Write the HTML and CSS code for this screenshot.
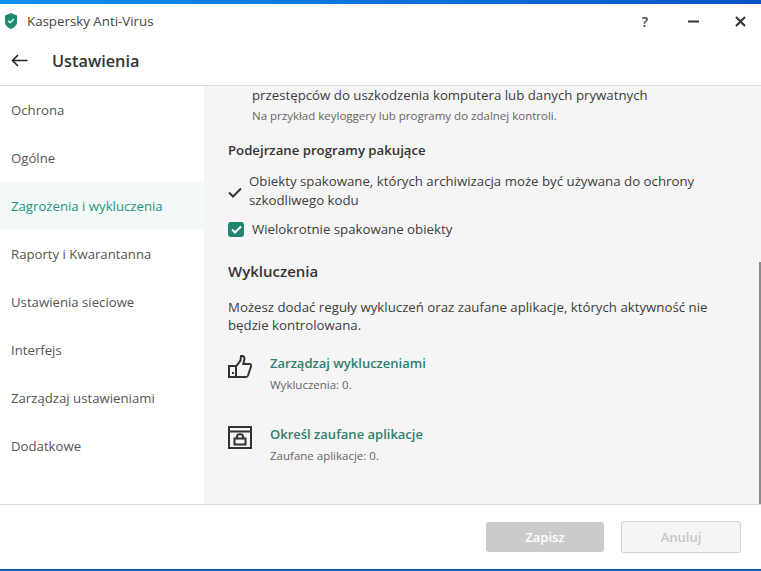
FILE: index.html
```html
<!DOCTYPE html>
<html lang="pl">
<head>
<meta charset="utf-8">
<title>Kaspersky Anti-Virus</title>
<link rel="stylesheet" href="styles.css">
</head>
<body>
<div class="window">
  <div class="topline"></div>
  <div class="titlebar">
    <svg class="logo" width="12" height="16" viewBox="0 0 12 16"><path d="M6 0 L12 2.5 V9 C12 12.5 9 14.8 6 16 C3 14.8 0 12.5 0 9 V2.5 Z" fill="#1d8a72"/><path d="M3.2 7.8 L5.2 9.8 L8.8 6" fill="none" stroke="#e8f6f2" stroke-width="1.4"/></svg>
    <span class="apptitle">Kaspersky Anti-Virus</span>
    <span class="winbtns">
      <span class="help">?</span>
      <svg width="11" height="3" viewBox="0 0 11 3"><rect width="11" height="2" y="0.5" fill="#333"/></svg>
      <svg width="11" height="11" viewBox="0 0 11 11"><path d="M1 1 L10 10 M10 1 L1 10" stroke="#333" stroke-width="2" fill="none"/></svg>
    </span>
  </div>
  <div class="header">
    <svg width="17" height="13" viewBox="0 0 17 13"><path d="M16.5 6.5 H1.5 M7 1 L1.5 6.5 L7 12" fill="none" stroke="#222" stroke-width="1.6"/></svg>
    <h1>Ustawienia</h1>
  </div>
  <div class="main">
    <nav class="side">
      <a>Ochrona</a>
      <a>Ogólne</a>
      <a class="active">Zagrożenia i wykluczenia</a>
      <a>Raporty i Kwarantanna</a>
      <a>Ustawienia sieciowe</a>
      <a>Interfejs</a>
      <a>Zarządzaj ustawieniami</a>
      <a>Dodatkowe</a>
    </nav>
    <div class="content">
      <p class="l1">przestępców do uszkodzenia komputera lub danych prywatnych</p>
      <p class="small l1b">Na przykład keyloggery lub programy do zdalnej kontroli.</p>
      <h3>Podejrzane programy pakujące</h3>
      <div class="check">
        <svg width="14" height="11" viewBox="0 0 14 11"><path d="M1 5.5 L5 9.5 L13 1.5" fill="none" stroke="#333" stroke-width="2"/></svg>
        <span>Obiekty spakowane, których archiwizacja może być używana do ochrony szkodliwego kodu</span>
      </div>
      <div class="boxrow">
        <span class="box"><svg width="11" height="9" viewBox="0 0 11 9"><path d="M1 4.5 L4 7.5 L10 1.5" fill="none" stroke="#fff" stroke-width="2"/></svg></span>
        <span>Wielokrotnie spakowane obiekty</span>
      </div>
      <h2>Wykluczenia</h2>
      <p class="desc">Możesz dodać reguły wykluczeń oraz zaufane aplikacje, których aktywność nie będzie kontrolowana.</p>
      <div class="item">
        <svg width="24" height="23" viewBox="0 0 24 23"><path d="M1 11 H8 V22 H1 Z M8 11.5 L12.5 5.5 L13 1 C15.5 0.6 16.8 2 16.3 4.5 L15.3 9 H21.5 C23 9 23.5 10 23 11.5 L20 20.5 C19.6 21.6 19 22 18 22 H8" fill="none" stroke="#333" stroke-width="2"/><rect x="4" y="17" width="2" height="2" fill="#333"/></svg>
        <div>
          <div class="link">Zarządzaj wykluczeniami</div>
          <div class="small">Wykluczenia: 0.</div>
        </div>
      </div>
      <div class="item second">
        <svg width="24" height="23" viewBox="0 0 24 23"><path d="M1 1 H23 V22 H1 Z M1 5.5 H23" fill="none" stroke="#333" stroke-width="2"/><path d="M6.5 12.5 H17.5 V18.5 H6.5 Z M9 12.5 V10.5 C9 7.4 15 7.4 15 10.5 V12.5" fill="none" stroke="#333" stroke-width="2"/></svg>
        <div>
          <div class="link">Określ zaufane aplikacje</div>
          <div class="small">Zaufane aplikacje: 0.</div>
        </div>
      </div>
      <div class="scrollbar"></div>
    </div>
  </div>
  <div class="footer">
    <button class="save">Zapisz</button>
    <button class="cancel">Anuluj</button>
  </div>
  <div class="bottomline"></div>
</div>
</body>
</html>
```
FILE: styles.css
```css
* { box-sizing: border-box; margin: 0; padding: 0; }
html, body { width: 761px; height: 571px; overflow: hidden; background: #fff; }
body { font-family: "Open Sans", "Noto Sans", sans-serif; font-size: 13.25px; color: #3d3d3d; }
.window { display: flex; flex-direction: column; height: 571px; }
.topline { height: 4px; background: linear-gradient(to right, #0f8fe8, #0a62cf 80%, #0a55c0); }
.titlebar { height: 34px; display: flex; align-items: center; padding-left: 5px; flex: none; }
.logo { margin-right: 10px; }
.apptitle { font-size: 13.3px; color: #444; }
.winbtns { margin-left: auto; display: flex; align-items: center; }
.winbtns > * { flex: none; }
.help { font-size: 14px; font-weight: 600; color: #444; margin-right: 40px; }
.winbtns svg:nth-of-type(1) { margin-right: 36px; }
.winbtns svg:nth-of-type(2) { margin-right: 15px; }
.header { height: 48px; display: flex; align-items: center; padding: 0 0 2px 11px; border-bottom: 1px solid #dcdcdc; flex: none; }
h1 { font-size: 16.3px; font-weight: 600; color: #333; margin-left: 24px; }
.main { flex: 1; display: flex; min-height: 0; }
.side { width: 204px; flex: none; display: flex; flex-direction: column; }
.side a { height: 48px; display: flex; align-items: center; padding-left: 11px; color: #555; font-size: 13.2px; }
.side a.active { background: #f2f9f6; color: #1f9182; }
.content { flex: 1; background: #f5f5f5; position: relative; padding: 0 24px; overflow: hidden; }
.l1 { margin-left: 24px; line-height: 18px; }
.small { font-size: 11.5px; color: #666; line-height: 16px; }
.l1b { margin-left: 24px; margin-top: 4px; }
h3 { font-size: 13.2px; font-weight: 600; color: #333; margin-top: 17px; line-height: 18px; }
.check { display: flex; align-items: center; gap: 7px; margin-top: 13px; line-height: 19px; max-width: 500px; }
.check svg { flex: none; margin-top: 2px; }
.boxrow { display: flex; align-items: center; gap: 8px; margin-top: 9px; line-height: 20px; }
.box { width: 16px; height: 15px; background: #1f8571; border-radius: 3px; display: flex; align-items: center; justify-content: center; }
h2 { font-size: 15px; font-weight: 600; color: #333; margin-top: 22px; line-height: 20px; }
.desc { margin-top: 17px; line-height: 18px; max-width: 500px; }
.item { display: flex; align-items: flex-start; gap: 18px; margin-top: 19px; }
.item svg { flex: none; margin-top: 2px; }
.item.second { margin-top: 31px; }
.link { font-size: 13px; font-weight: 600; color: #2f7f6d; line-height: 20px; }
.item .small { margin-top: 4px; }
.scrollbar { position: absolute; right: 0; top: 176px; bottom: 0; width: 2px; background: #8a8a8a; }
.footer { height: 65px; border-top: 1px solid #dcdcdc; display: flex; justify-content: flex-end; align-items: center; gap: 17px; padding-right: 20px; flex: none; }
button { font-family: inherit; font-size: 13px; font-weight: 600; border-radius: 3px; }
.save { width: 118px; height: 30px; background: #cbcbcb; color: #fff; border: none; }
.cancel { width: 120px; height: 32px; background: #f5f5f5; color: #c8c8c8; border: 1px solid #d2d2d2; }
.bottomline { height: 2px; background: #0e5fb0; flex: none; }
```
